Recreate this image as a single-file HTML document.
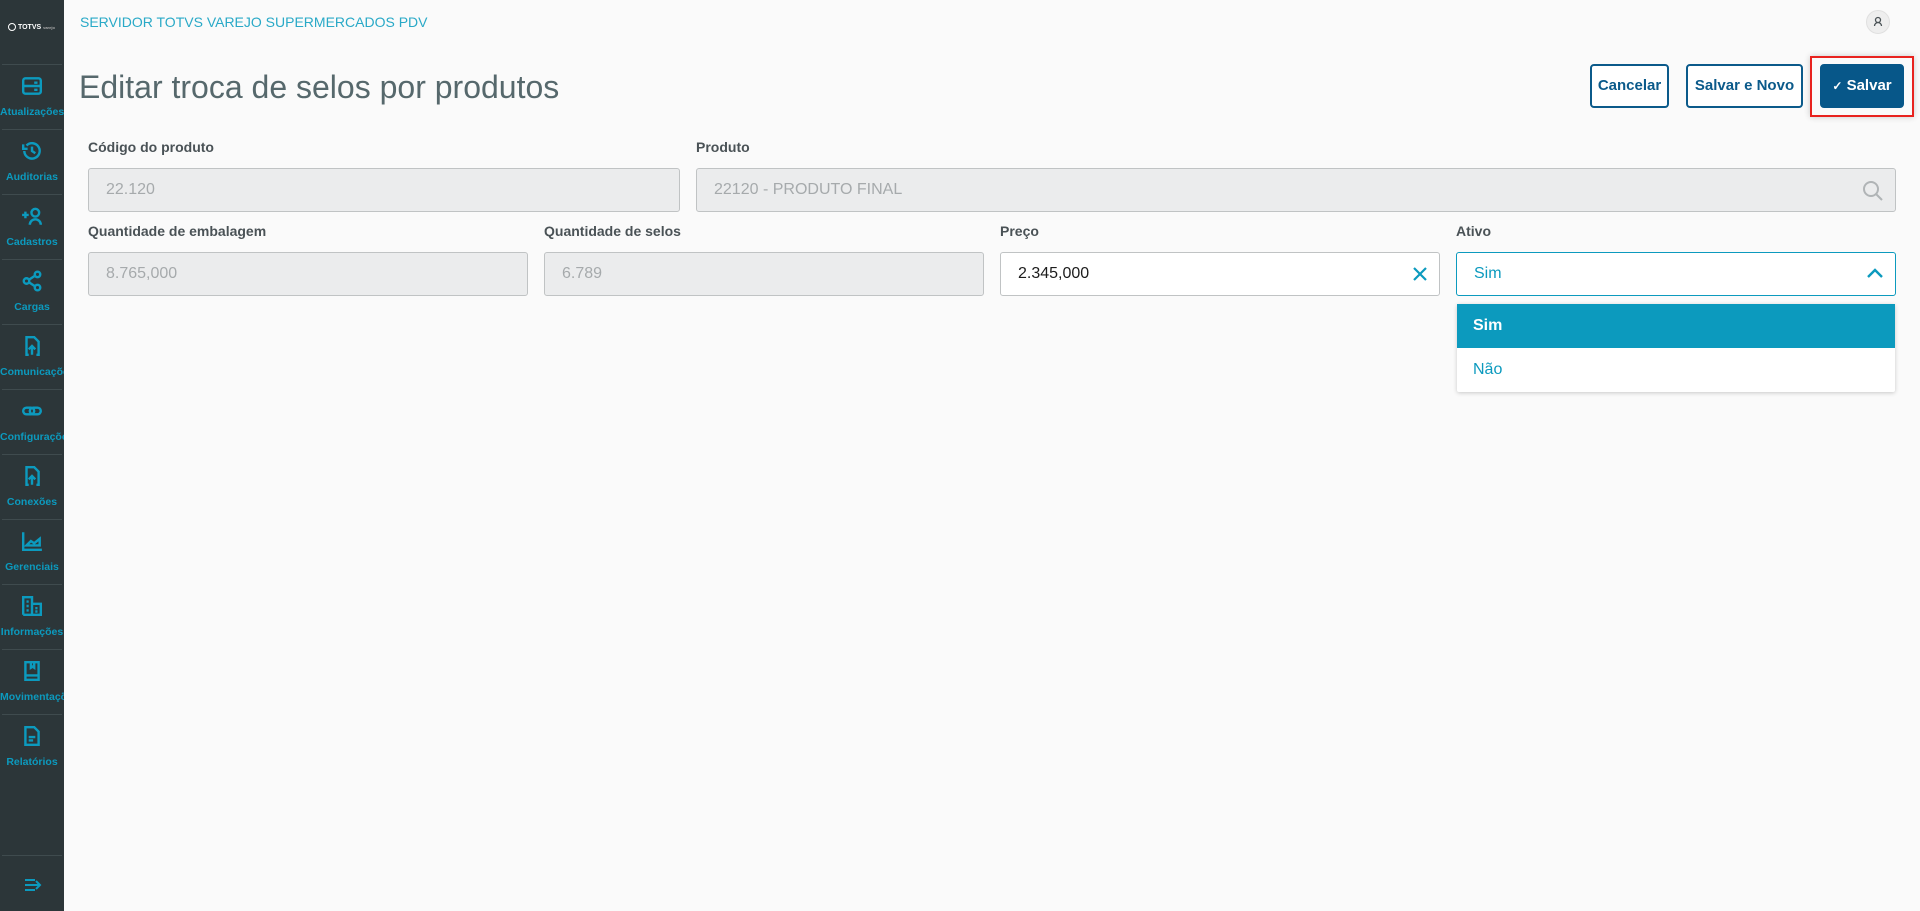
<!DOCTYPE html>
<html><head><meta charset="utf-8"><style>
*{box-sizing:border-box;margin:0;padding:0}
body{width:1920px;height:911px;background:#fafafa;font-family:"Liberation Sans",sans-serif;position:relative;overflow:hidden}
.sb{position:absolute;left:0;top:0;width:64px;height:911px;background:#2c3639}
.div{position:absolute;left:2px;width:60px;height:1px;background:#3f4b4e}
.it{position:absolute;left:0;width:64px;text-align:center}
.it svg{position:absolute;left:21px;top:-11px}
.it span{position:absolute;left:0;width:64px;top:20px;font-size:10.5px;font-weight:bold;color:#0c9abe;white-space:nowrap;overflow:hidden;text-align:center}
.abs{position:absolute}
.lbl{position:absolute;font-size:14px;font-weight:bold;color:#4a5256}
.inp{position:absolute;height:44px;border:1px solid #c0c3c4;border-radius:3px;background:#ebeced;font-size:16px;color:#a6aaac;padding-left:17px;line-height:42px}
.btn{position:absolute;top:64px;height:44px;border:2px solid #0b5a8a;border-radius:4px;color:#0b5a8a;font-size:15px;font-weight:bold;text-align:center;line-height:40px;background:#fff}
</style></head><body>
<div class="sb">
 <div class="abs" style="left:8px;top:23px;color:#fff;font-size:7px;font-weight:bold;white-space:nowrap"><span style="display:inline-block;width:8px;height:8px;border:1.5px solid #fff;border-radius:50%;vertical-align:middle"></span> TOTVS <span style="font-size:4px;color:#aaa">varejo</span></div>
 <div class="div" style="top:64px"></div><div class="div" style="top:129px"></div><div class="div" style="top:194px"></div><div class="div" style="top:259px"></div><div class="div" style="top:324px"></div><div class="div" style="top:389px"></div><div class="div" style="top:454px"></div><div class="div" style="top:519px"></div><div class="div" style="top:584px"></div><div class="div" style="top:649px"></div><div class="div" style="top:714px"></div><div class="div" style="top:855px"></div>
 <div class="it" style="top:86px"><svg width="22" height="22" viewBox="0 0 20 20" fill="none" stroke="#0c9abe" stroke-width="2.2"><rect x="2" y="3" width="16" height="14" rx="2"/><path d="M2 10h16M12 7h3M12 13.5h3"/></svg><span>Atualizações</span></div>
 <div class="it" style="top:151px"><svg width="22" height="22" viewBox="0 0 20 20" fill="none" stroke="#0c9abe" stroke-width="2.2"><path d="M3 10a7 7 0 1 0 2-5M2 4v4h4M10 6v4l3 2"/></svg><span>Auditorias</span></div>
 <div class="it" style="top:216px"><svg width="22" height="22" viewBox="0 0 20 20" fill="none" stroke="#0c9abe" stroke-width="2.2"><path d="M1 9h6M4 6v6"/><circle cx="13" cy="7" r="3.5"/><path d="M8 18a5 5 0 0 1 10 0"/></svg><span>Cadastros</span></div>
 <div class="it" style="top:281px"><svg width="22" height="22" viewBox="0 0 20 20" fill="none" stroke="#0c9abe" stroke-width="2.2"><circle cx="5" cy="10" r="2.5"/><circle cx="15" cy="4" r="2.5"/><circle cx="15" cy="16" r="2.5"/><path d="M7 9l6-4M7 11l6 4"/></svg><span>Cargas</span></div>
 <div class="it" style="top:346px"><svg width="22" height="22" viewBox="0 0 20 20" fill="none" stroke="#0c9abe" stroke-width="2.2"><path d="M7 18H5V2h7l4 4v12h-2M10 18v-8M7 13l3-3 3 3"/></svg><span>Comunicações</span></div>
 <div class="it" style="top:411px"><svg width="22" height="22" viewBox="0 0 20 20" fill="none" stroke="#0c9abe" stroke-width="2.2"><rect x="2" y="7" width="10" height="6" rx="3"/><rect x="8" y="7" width="10" height="6" rx="3"/></svg><span>Configurações</span></div>
 <div class="it" style="top:476px"><svg width="22" height="22" viewBox="0 0 20 20" fill="none" stroke="#0c9abe" stroke-width="2.2"><path d="M7 18H5V2h7l4 4v12h-2M10 18v-8M7 13l3-3 3 3"/></svg><span>Conexões</span></div>
 <div class="it" style="top:541px"><svg width="22" height="22" viewBox="0 0 20 20" fill="none" stroke="#0c9abe" stroke-width="2.2"><path d="M2 2v16h17M5 14l4-4 3 2 5-4v6H5z"/></svg><span>Gerenciais</span></div>
 <div class="it" style="top:606px"><svg width="22" height="22" viewBox="0 0 20 20" fill="none" stroke="#0c9abe" stroke-width="2.2"><path d="M2 18V2h8v16M10 8h8v10H2M5 6h2M5 10h2M5 14h2M13 12h2M13 15h2"/></svg><span>Informações</span></div>
 <div class="it" style="top:671px"><svg width="22" height="22" viewBox="0 0 20 20" fill="none" stroke="#0c9abe" stroke-width="2.2"><path d="M4 2h12v16H4zM4 14h12M9 2v5l1.5-1 1.5 1V2"/></svg><span>Movimentações</span></div>
 <div class="it" style="top:736px"><svg width="22" height="22" viewBox="0 0 20 20" fill="none" stroke="#0c9abe" stroke-width="2.2"><path d="M4 2h8l4 4v12H4zM7 11h6M7 14h4"/></svg><span>Relatórios</span></div>
 <svg class="abs" style="left:24px;top:877px" width="18" height="16" viewBox="0 0 18 16" fill="none" stroke="#0c9abe" stroke-width="2"><path d="M1 3h10M1 8h15M1 13h10M12 4l4 4-4 4"/></svg>
</div>
<div class="abs" style="left:80px;top:14px;font-size:14px;color:#29a9c7">SERVIDOR TOTVS VAREJO SUPERMERCADOS PDV</div>
<div class="abs" style="left:1866px;top:10px;width:24px;height:24px;border-radius:50%;background:#eee;border:1px solid #e0e0e0"><svg width="22" height="22" viewBox="0 0 22 22" fill="none" stroke="#4a5256" stroke-width="1.3"><circle cx="11" cy="9" r="2.5"/><path d="M7.5 15a3.5 3.5 0 0 1 7 0"/></svg></div>
<div class="abs" style="left:79px;top:69px;font-size:32px;font-weight:300;color:#56686c">Editar troca de selos por produtos</div>
<div class="btn" style="left:1590px;width:79px">Cancelar</div>
<div class="btn" style="left:1686px;width:117px">Salvar e Novo</div>
<div class="abs" style="left:1810px;top:56px;width:104px;height:61px;border:2px solid #e8221e;box-shadow:0 0 6px rgba(0,0,0,.2)"></div>
<div class="btn" style="left:1820px;width:84px;background:#075789;border-color:#075789;color:#fff"><span style="font-size:12px">✓</span> Salvar</div>

<div class="lbl" style="left:88px;top:139px">Código do produto</div>
<div class="inp" style="left:88px;top:168px;width:592px">22.120</div>
<div class="lbl" style="left:696px;top:139px">Produto</div>
<div class="inp" style="left:696px;top:168px;width:1200px">22120 - PRODUTO FINAL<svg class="abs" style="right:10px;top:10px" width="24" height="24" viewBox="0 0 24 24" fill="none" stroke="#b0b4b6" stroke-width="2"><circle cx="10" cy="10" r="7"/><path d="M15 15l6 6"/></svg></div>

<div class="lbl" style="left:88px;top:223px">Quantidade de embalagem</div>
<div class="inp" style="left:88px;top:252px;width:440px">8.765,000</div>
<div class="lbl" style="left:544px;top:223px">Quantidade de selos</div>
<div class="inp" style="left:544px;top:252px;width:440px">6.789</div>
<div class="lbl" style="left:1000px;top:223px">Preço</div>
<div class="inp" style="left:1000px;top:252px;width:440px;background:#fff;color:#1c1c1c">2.345,000<svg class="abs" style="right:12px;top:14px" width="14" height="14" viewBox="0 0 14 14" stroke="#0c9abe" stroke-width="2.2"><path d="M1 1l12 12M13 1L1 13"/></svg></div>
<div class="lbl" style="left:1456px;top:223px">Ativo</div>
<div class="inp" style="left:1456px;top:252px;width:440px;background:#fff;border-color:#0c9abe;color:#0c9abe">Sim<svg class="abs" style="right:12px;top:15px" width="16" height="10" viewBox="0 0 16 10" fill="none" stroke="#0c9abe" stroke-width="2.4"><path d="M1 9l7-7 7 7"/></svg></div>
<div class="abs" style="left:1457px;top:304px;width:438px;height:88px;background:#fff;box-shadow:0 1px 4px rgba(0,0,0,.2);border-radius:2px">
 <div style="height:44px;background:#0c9abe;color:#fff;font-weight:bold;font-size:16px;line-height:44px;padding-left:16px">Sim</div>
 <div style="height:44px;color:#0c9abe;font-size:16px;line-height:44px;padding-left:16px">Não</div>
</div>
</body></html>
